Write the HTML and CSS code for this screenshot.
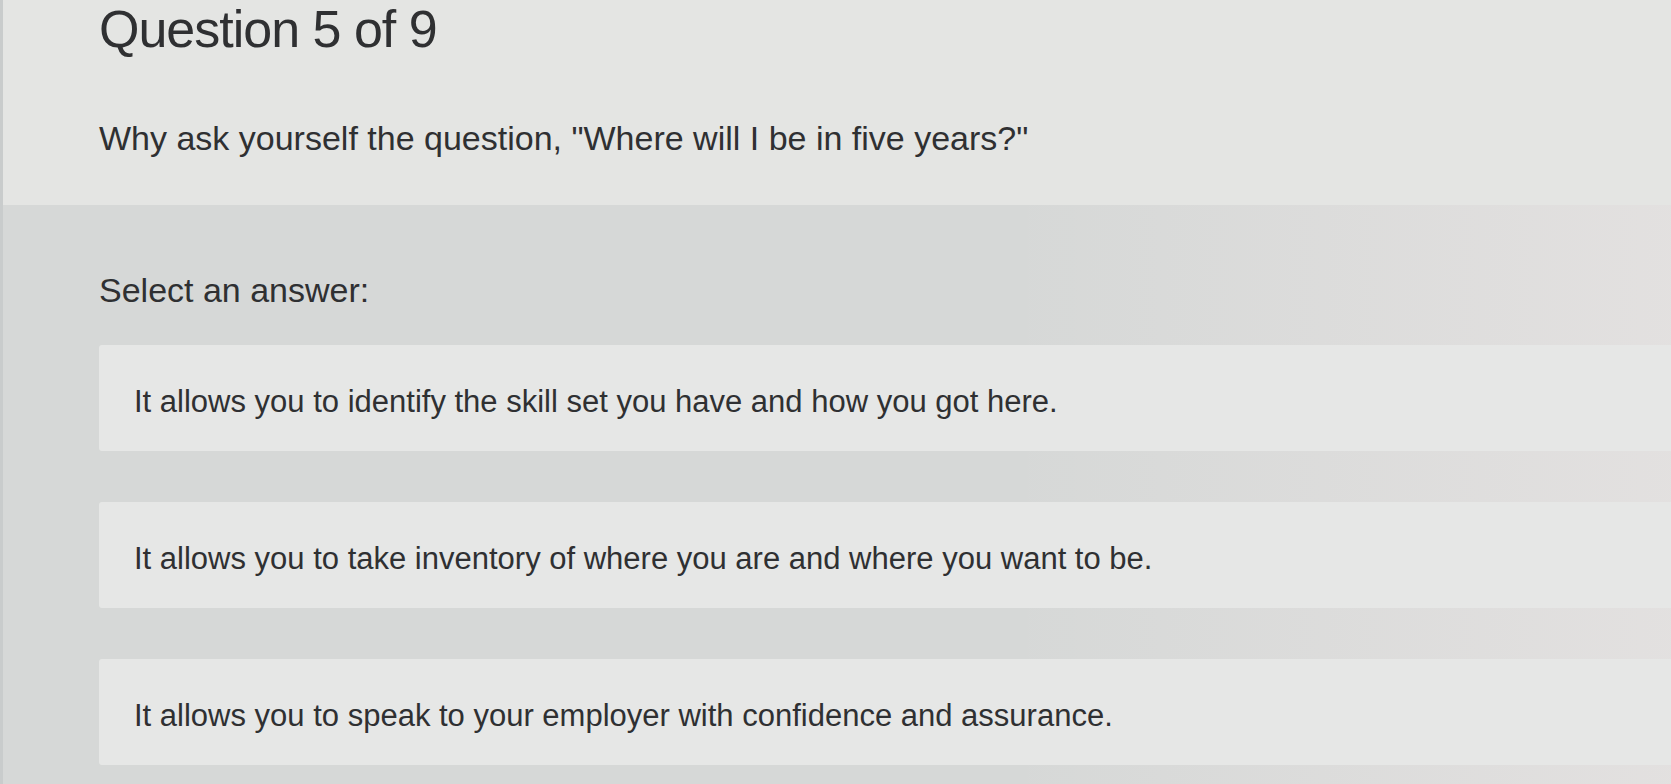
FILE: index.html
```html
<!DOCTYPE html>
<html lang="en">
<head>
  <meta charset="UTF-8">
  <meta name="viewport" content="width=device-width, initial-scale=1.0">
  <title>Question 5 of 9</title>
  <link rel="stylesheet" href="styles.css">
</head>
<body>
  <div class="screen">
    <header class="question_head">
      <h1 class="title">Question 5 of 9</h1>
      <p class="prompt">Why ask yourself the question, "Where will I be in five years?"</p>
    </header>

    <section class="answers">
      <p class="label">Select an answer:</p>
      <ul class="choices">
        <li class="choice">It allows you to identify the skill set you have and how you got here.</li>
        <li class="choice">It allows you to take inventory of where you are and where you want to be.</li>
        <li class="choice">It allows you to speak to your employer with confidence and assurance.</li>
      </ul>
    </section>
  </div>
</body>
</html>
```

FILE: styles.css
```css
* {
  margin: 0;
  padding: 0;
  list-style-type: none;
  box-sizing: border-box;
}

html {font-family: "Liberation Sans", Arial, sans-serif;}

body {
  background-color: #d6d8d7;
  color: #2f3032;
  height: 784px;
  overflow: hidden;
}

.screen {
  height: 100%;
  border-left: 3px solid #c9cccc;
  background: linear-gradient(to right, rgba(255,255,255,0) 60%, rgba(250,240,240,.35) 100%);
}

.question_head {
  height: 205px;
  padding-left: 96px;
  background-color: #e4e5e3;
}

.title {
  font-size: 52px;
  font-weight: normal;
  line-height: 58px;
  letter-spacing: -1px;
}

.prompt {
  font-size: 34px;
  line-height: 40px;
  margin-top: 60px;
}

.answers {
  padding-left: 96px;
}

.label {
  font-size: 34px;
  line-height: 40px;
  padding-top: 65px;
}

.choices {
  margin-top: 35px;
}

.choice {
  background-color: #e6e7e6;
  height: 106px;
  padding-left: 35px;
  padding-top: 37px;
  font-size: 31px;
  line-height: 40px;
  border-radius: 3px 0 0 3px;
  margin-bottom: 51px;
}
```
